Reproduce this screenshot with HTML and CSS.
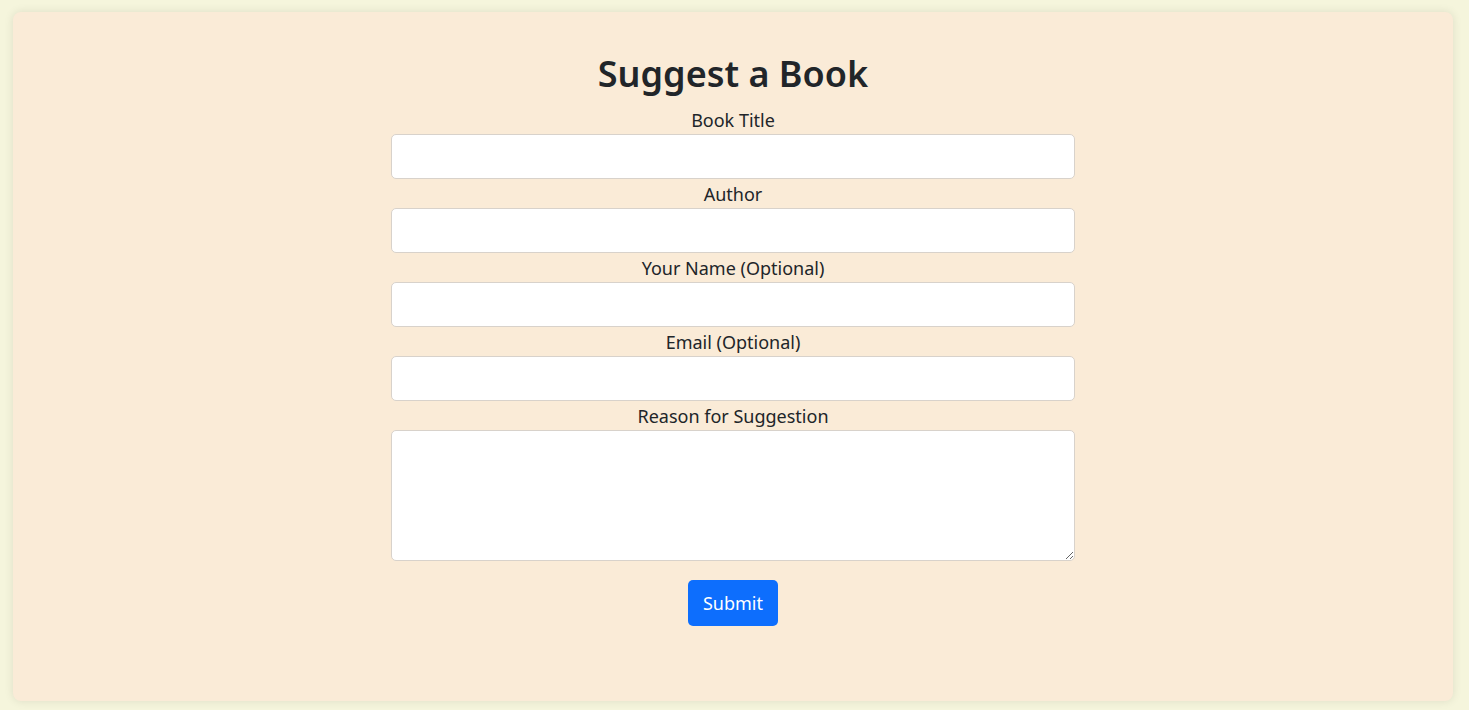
FILE: index.html
```html
<!DOCTYPE html>
<html lang="en">
<head>
<meta charset="utf-8">
<title>Suggest a Book</title>
<link rel="stylesheet" href="styles.css">
</head>
<body>
<main class="card">
  <h1 class="title">Suggest a Book</h1>
  <form class="form">
    <label class="label" for="title">Book Title</label>
    <input class="field" id="title" type="text">
    <label class="label" for="author">Author</label>
    <input class="field" id="author" type="text">
    <label class="label" for="name">Your Name (Optional)</label>
    <input class="field" id="name" type="text">
    <label class="label" for="email">Email (Optional)</label>
    <input class="field" id="email" type="email">
    <label class="label" for="reason">Reason for Suggestion</label>
    <textarea class="field area" id="reason"></textarea>
    <button class="submit" type="button">Submit</button>
  </form>
</main>
</body>
</html>
```
FILE: styles.css
```css
* { box-sizing: border-box; }
html, body { height: 100%; }
body {
  margin: 0;
  padding: 12px 16px 9px 13px;
  background: #f5f5dc;
  font-family: "Noto Sans", "Open Sans", sans-serif;
  color: #212529;
  display: flex;
  flex-direction: column;
}
.card {
  flex: 1;
  background: #faebd7;
  border-radius: 8px;
  box-shadow: 0 0 10px rgba(0, 0, 0, 0.1);
  padding: 38px 0 0;
  display: flex;
  flex-direction: column;
  align-items: center;
}
.title {
  margin: 0 0 7px;
  font-size: 36px;
  line-height: 48px;
  font-weight: 600;
  text-align: center;
}
.form {
  width: 684px;
  display: flex;
  flex-direction: column;
  align-items: center;
}
.label {
  display: block;
  width: 100%;
  text-align: center;
  font-size: 18px;
  line-height: 27px;
  padding-top: 2px;
}
.field {
  display: block;
  width: 100%;
  height: 45px;
  border: 1px solid #d8d2cb;
  border-radius: 5px;
  background: #fff;
  font: inherit;
  padding: 6px 12px;
}
.area {
  height: 131px;
  resize: vertical;
}
.submit {
  margin-top: 19px;
  width: 90px;
  height: 46px;
  border: none;
  border-radius: 5px;
  background: #0d6efd;
  color: #fff;
  font-family: inherit;
  font-size: 18px;
  cursor: pointer;
}
```
